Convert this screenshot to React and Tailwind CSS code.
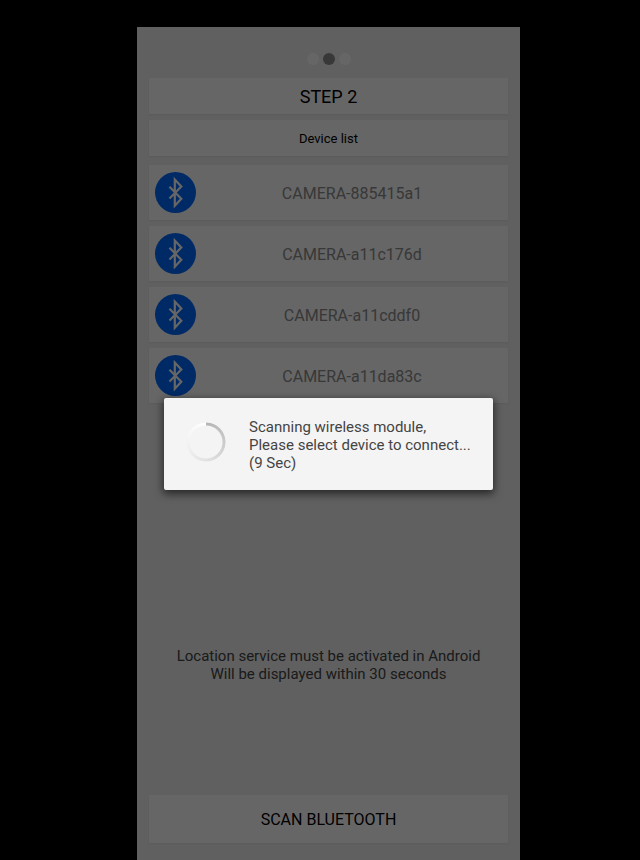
const devices = [
  "CAMERA-885415a1",
  "CAMERA-a11c176d",
  "CAMERA-a11cddf0",
  "CAMERA-a11da83c",
];

export default function App() {
  return (
    <div className="flex min-h-screen bg-black pt-[27px] pr-[120px] pl-[137px] font-['Roboto',sans-serif]">
      <div className="relative flex flex-1 flex-col">
        <main className="flex flex-1 flex-col bg-[#efefef] px-3 pb-[17px]">
          <StepDots />

          <h1 className="flex h-9 items-center justify-center bg-white pt-0.5 text-lg text-black shadow-xs">
            STEP 2
          </h1>
          <h2 className="mt-1.5 flex h-9 items-center justify-center bg-white pt-0.5 text-[13px] text-black shadow-xs">
            Device list
          </h2>

          <ul className="mt-[9px] flex flex-col gap-1.5">
            {devices.map((name) => (
              <DeviceRow key={name} name={name} />
            ))}
          </ul>

          <p className="mt-auto text-center text-[15px] leading-[18px] text-[#444]">
            Location service must be activated in Android
            <br />
            Will be displayed within 30 seconds
          </p>

          <button
            type="button"
            className="mt-28 h-12 bg-white pt-0.5 text-base text-black shadow-xs"
          >
            SCAN BLUETOOTH
          </button>
        </main>

        {/* Scrim + progress dialog */}
        <div className="absolute inset-0 flex items-center justify-center bg-black/60 px-[27px]">
          <ScanDialog seconds={9} />
        </div>
      </div>
    </div>
  );
}

function StepDots() {
  return (
    <div className="flex h-[51px] items-center justify-center gap-1 pt-3">
      <span className="size-3 rounded-full bg-white" />
      <span className="size-3 rounded-full bg-[#8c8c8c]" />
      <span className="size-3 rounded-full bg-white" />
    </div>
  );
}

function DeviceRow({ name }) {
  return (
    <li>
      <button
        type="button"
        className="flex h-[55px] w-full items-center bg-white px-1.5 text-base text-[#8c8c8c] shadow-xs"
      >
        <BluetoothIcon />
        <span className="flex-1 pt-0.5 pl-1.5 text-center">{name}</span>
      </button>
    </li>
  );
}

function BluetoothIcon() {
  return (
    <svg viewBox="0 0 41 41" className="size-[41px] shrink-0" aria-hidden="true">
      <circle cx="20.5" cy="20.5" r="20.5" fill="#006aff" />
      <path
        d="M14.5 14.8 26.3 26.8l-6.5 7V7.5l6.5 7-11.8 12"
        fill="none"
        stroke="#fff"
        strokeWidth="2.2"
      />
    </svg>
  );
}

function ScanDialog({ seconds }) {
  return (
    <div
      role="dialog"
      aria-label="Scanning"
      className="flex h-[92px] w-full items-center rounded-xs bg-[#f4f4f4] pl-[22px] shadow-[0_3px_8px_1px_rgba(0,0,0,0.6)]"
    >
      <div
        role="progressbar"
        aria-label="Scanning"
        className="mb-1 size-10 shrink-0 rounded-full bg-[conic-gradient(#b4b4b4,#cfcfcf_30%,#e2e2e2_50%,#f0f0f0_70%,#fff)] mask-[radial-gradient(circle,transparent_16px,black_17px,black_19px,transparent_20px)]"
      />
      <p className="ml-[23px] pt-0.5 text-[15px] leading-[18px] text-[#444]">
        Scanning wireless module,
        <br />
        Please select device to connect...
        <br />({seconds} Sec)
      </p>
    </div>
  );
}
